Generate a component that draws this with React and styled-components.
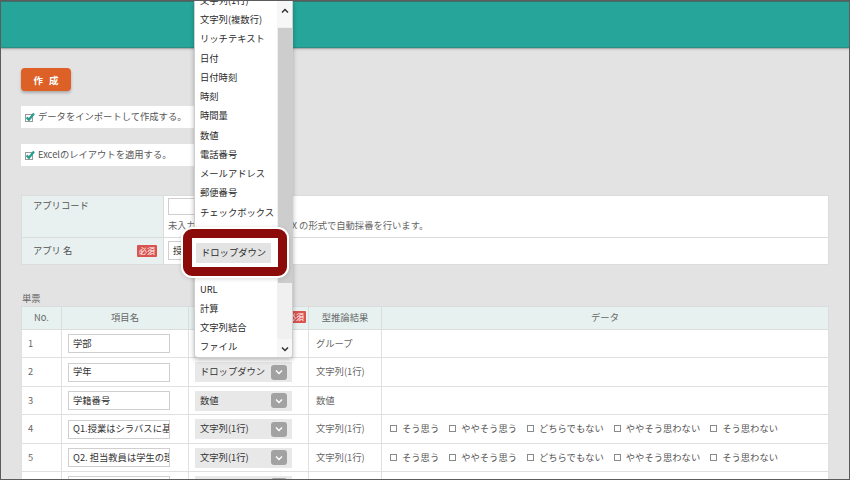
import React from "react";
import styled, { createGlobalStyle } from "styled-components";

const Global = createGlobalStyle`
  html, body { margin: 0; padding: 0; }
  body {
    width: 850px; height: 480px; overflow: hidden;
    background: #e4e3e3;
    font-family: "Noto Sans CJK JP", "Noto Sans", sans-serif;
    color: #444;
  }
  * { box-sizing: border-box; }
`;

const FONT = 9.3;

const Frame = styled.div`
  position: relative;
  width: 850px;
  height: 480px;
  border: 1px solid #5c5c5c;
  background: #e4e3e3;
  overflow: hidden;
  display: flex;
  flex-direction: column;
  font-size: ${FONT}px;
`;

const Header = styled.header`
  flex: none;
  height: 47px;
  background: #26a69a;
  border-top: 1px solid #3d716c;
  border-bottom: 1px solid #2a8e85;
  box-shadow: 0 1px 1px rgba(0, 0, 0, 0.18), 0 2px 2px rgba(0, 0, 0, 0.08);
`;

const Main = styled.main`
  padding: 20px 20px 0 20px;
  display: flex;
  flex-direction: column;
  align-items: flex-start;
`;

const CreateButton = styled.button`
  width: 50px;
  height: 23px;
  border: none;
  border-radius: 4px;
  background: #dd6027;
  color: #fff;
  font-family: inherit;
  font-size: 9.5px;
  font-weight: bold;
  letter-spacing: 6px;
  padding: 0 0 0 6px;
  box-shadow: 0 2px 3px rgba(0, 0, 0, 0.25);
`;

const CheckRow = styled.div`
  margin-top: ${(p) => p.$mt}px;
  width: 250px;
  height: 22px;
  background: #fff;
  display: flex;
  align-items: center;
  gap: 3px;
  padding-left: 4px;
  color: #555;
  line-height: 1;
`;

const CheckedIcon = () => (
  <svg width="10" height="10" viewBox="0 0 10 10">
    <rect x="0.5" y="2.5" width="7" height="7" fill="#fff" stroke="#9a9a9a" />
    <path d="M1.6 5.4 L3.9 7.7 L9 1.6" fill="none" stroke="#2b9c8e" strokeWidth="2.3" />
  </svg>
);

const FormTable = styled.div`
  margin-top: 29px;
  width: 808px;
  display: grid;
  grid-template-columns: 141px 1fr;
  grid-template-rows: 41px 26px;
  gap: 1px;
  background: #dcdcdc;
  border: 1px solid #dcdcdc;
`;

const LabelCell = styled.div`
  background: #e8f1f0;
  color: #555;
  display: flex;
  align-items: ${(p) => (p.$top ? "flex-start" : "center")};
  justify-content: space-between;
  padding: ${(p) => (p.$top ? "5px 6px 0 11px" : "0 6px 1px 11px")};
  line-height: 1;
`;

const ValueCell = styled.div`
  background: #fff;
  padding: ${(p) => p.$pad};
  display: flex;
  flex-direction: column;
  align-items: flex-start;
`;

const TextInput = styled.div`
  width: ${(p) => p.$w}px;
  height: ${(p) => p.$h}px;
  border: 1px solid #cfcfcf;
  background: #fff;
  color: #333;
  padding-left: 4px;
  display: flex;
  align-items: center;
  white-space: nowrap;
  overflow: hidden;
  line-height: 1;
`;

const Hint = styled.div`
  margin-top: 6px;
  color: #666;
  line-height: 1;
  white-space: nowrap;
`;

const Badge = styled.span`
  background: #d9534f;
  color: #fff;
  font-size: 8px;
  line-height: 1;
  padding: 2px 2px;
  border-radius: 1px;
`;

const SectionLabel = styled.div`
  margin-top: 27px;
  height: 12px;
  line-height: 12px;
  color: #666;
  margin-left: 1px;
`;

const Table = styled.table`
  margin-top: 2px;
  width: 808px;
  border-collapse: collapse;
  table-layout: fixed;
  background: #fff;
`;

const Th = styled.th`
  height: 23px;
  background: #e7f2f0;
  border: 1px solid #dcdcdc;
  font-weight: normal;
  color: #666;
  padding: 0;
  position: relative;
  line-height: 1;
`;

const HeadBadge = styled(Badge)`
  position: absolute;
  right: 2px;
  top: 4px;
`;

const Tr = styled.tr`
  height: ${(p) => p.$h}px;
`;

const Td = styled.td`
  border: 1px solid #e0e0e0;
  padding: 0 0 0 ${(p) => p.$pl || 0}px;
  color: ${(p) => p.$c || "#555"};
  vertical-align: middle;
  line-height: 1;
  white-space: nowrap;
  overflow: hidden;
`;

const SelectBox = styled.div`
  width: 97px;
  height: 20px;
  background: #e8e8e8;
  display: flex;
  align-items: center;
  justify-content: space-between;
  padding: 0 5px 0 5px;
  color: #333;
`;

const ArrowBtn = styled.div`
  width: 16px;
  height: 15px;
  background: #a2a2a2;
  border-radius: 3px;
  display: flex;
  align-items: center;
  justify-content: center;
`;

const Chevron = () => (
  <svg width="8" height="6" viewBox="0 0 8 6">
    <path d="M1 1.5 L4 4.5 L7 1.5" fill="none" stroke="#fff" strokeWidth="1.4" />
  </svg>
);

const Options = styled.div`
  display: flex;
  align-items: center;
  gap: 10px;
`;

const Option = styled.span`
  display: inline-flex;
  align-items: center;
  gap: 5px;
  color: #555;
`;

const Box = styled.span`
  width: 7px;
  height: 7px;
  border: 1px solid #8a8a8a;
  background: #fff;
`;

/* Overlay: dropdown list */
const Dropdown = styled.div`
  position: absolute;
  left: 193px;
  top: 0;
  width: 99px;
  height: 357px;
  background: #fff;
  border: 1px solid #cdcdcd;
  border-top: none;
  border-radius: 0 0 4px 4px;
  box-shadow: 0 2px 5px rgba(0, 0, 0, 0.28);
  display: flex;
  overflow: hidden;
`;

const List = styled.div`
  flex: 1;
  margin-top: -10px;
  display: flex;
  flex-direction: column;
`;

const Item = styled.div`
  height: 19.25px;
  flex: none;
  display: flex;
  align-items: center;
  padding-left: 5px;
  color: #2a2a2a;
  white-space: nowrap;
  line-height: 1;
`;

const Scrollbar = styled.div`
  width: 15px;
  flex: none;
  background: #f0f0f0;
  display: flex;
  flex-direction: column;
  align-items: center;
`;

const ScrollArrow = styled.div`
  height: ${(p) => p.$h}px;
  width: 100%;
  background: #f7f7f7;
  display: flex;
  align-items: ${(p) => (p.$up ? "flex-start" : "flex-end")};
  justify-content: center;
  padding: ${(p) => (p.$up ? "7px 0 0" : "0 0 5px")};
`;

const Thumb = styled.div`
  width: 14px;
  height: 255px;
  background: #cdcdcd;
  margin-top: 1px;
`;

const Spacer = styled.div`
  flex: 1;
`;

/* Overlay: red callout frame */
const Callout = styled.div`
  position: absolute;
  left: 182px;
  top: 228px;
  width: 104px;
  height: 47px;
  border: 9px solid #8b0a0a;
  border-radius: 9px;
  background: #fff;
  box-shadow: 0 0 0 2px #fff, 0 1px 4px 2px rgba(0, 0, 0, 0.15);
  padding: 5px 0 0 4px;
`;

const Highlighted = styled.div`
  width: 75px;
  height: 20px;
  background: #e3e3e3;
  color: #2a2a2a;
  display: flex;
  align-items: center;
  padding-left: 5px;
  line-height: 1;
  white-space: nowrap;
`;

const types = [
  "文字列(1行)",
  "文字列(複数行)",
  "リッチテキスト",
  "日付",
  "日付時刻",
  "時刻",
  "時間量",
  "数値",
  "電話番号",
  "メールアドレス",
  "郵便番号",
  "チェックボックス",
  "ラジオボタン",
  "ドロップダウン",
  "複数選択",
  "URL",
  "計算",
  "文字列結合",
  "ファイル",
];

const likert = ["そう思う", "ややそう思う", "どちらでもない", "ややそう思わない", "そう思わない"];

const rows = [
  { no: "1", name: "学部", type: "グループ", inferred: "グループ", data: false, h: 28 },
  { no: "2", name: "学年", type: "ドロップダウン", inferred: "文字列(1行)", data: false, h: 29 },
  { no: "3", name: "学籍番号", type: "数値", inferred: "数値", data: false, h: 28 },
  { no: "4", name: "Q1.授業はシラバスに基づいて行われた", type: "文字列(1行)", inferred: "文字列(1行)", data: true, h: 29 },
  { no: "5", name: "Q2. 担当教員は学生の理解度に配慮した", type: "文字列(1行)", inferred: "文字列(1行)", data: true, h: 28 },
  { no: "6", name: "Q3. 授業の内容は理解できた", type: "文字列(1行)", inferred: "文字列(1行)", data: true, h: 28 },
];

export default function App() {
  return (
    <>
      <Global />
      <Frame>
        <Header />
        <Main>
          <CreateButton>作成</CreateButton>
          <CheckRow $mt={15}>
            <CheckedIcon />
            <span>データをインポートして作成する。</span>
          </CheckRow>
          <CheckRow $mt={16}>
            <CheckedIcon />
            <span>Excelのレイアウトを適用する。</span>
          </CheckRow>

          <FormTable>
            <LabelCell $top>アプリコード</LabelCell>
            <ValueCell $pad="2px 4px 0">
              <TextInput $w={110} $h={17} />
              <Hint>未入力の場合、XXXXXXXXXXXX の形式で自動採番を行います。</Hint>
            </ValueCell>
            <LabelCell>
              <span>アプリ 名</span>
              <Badge>必須</Badge>
            </LabelCell>
            <ValueCell $pad="3px 4px 0">
              <TextInput $w={110} $h={19}>授業評価アンケート</TextInput>
            </ValueCell>
          </FormTable>

          <SectionLabel>単票</SectionLabel>
          <Table>
            <colgroup>
              <col style={{ width: 40 }} />
              <col style={{ width: 127 }} />
              <col style={{ width: 120 }} />
              <col style={{ width: 73 }} />
              <col />
            </colgroup>
            <thead>
              <tr>
                <Th>No.</Th>
                <Th>項目名</Th>
                <Th>
                  フィールドタイプ
                  <HeadBadge>必須</HeadBadge>
                </Th>
                <Th>型推論結果</Th>
                <Th>データ</Th>
              </tr>
            </thead>
            <tbody>
              {rows.map((r) => (
                <Tr key={r.no} $h={r.h}>
                  <Td $pl={6} $c="#666">{r.no}</Td>
                  <Td $pl={6}>
                    <TextInput $w={102} $h={19}>{r.name}</TextInput>
                  </Td>
                  <Td $pl={6}>
                    <SelectBox>
                      <span>{r.type}</span>
                      <ArrowBtn>
                        <Chevron />
                      </ArrowBtn>
                    </SelectBox>
                  </Td>
                  <Td $pl={7} $c="#666">{r.inferred}</Td>
                  <Td $pl={8}>
                    {r.data && (
                      <Options>
                        {likert.map((l) => (
                          <Option key={l}>
                            <Box />
                            {l}
                          </Option>
                        ))}
                      </Options>
                    )}
                  </Td>
                </Tr>
              ))}
            </tbody>
          </Table>
        </Main>

        <Dropdown>
          <List>
            {types.map((t) => (
              <Item key={t}>{t}</Item>
            ))}
          </List>
          <Scrollbar>
            <ScrollArrow $up $h={26}>
              <svg width="8" height="6" viewBox="0 0 8 6">
                <path d="M1 4.5 L4 1.5 L7 4.5" fill="none" stroke="#333" strokeWidth="1.5" />
              </svg>
            </ScrollArrow>
            <Thumb />
            <Spacer />
            <ScrollArrow $h={18}>
              <svg width="8" height="6" viewBox="0 0 8 6">
                <path d="M1 1.5 L4 4.5 L7 1.5" fill="none" stroke="#333" strokeWidth="1.5" />
              </svg>
            </ScrollArrow>
          </Scrollbar>
        </Dropdown>

        <Callout>
          <Highlighted>ドロップダウン</Highlighted>
        </Callout>
      </Frame>
    </>
  );
}
